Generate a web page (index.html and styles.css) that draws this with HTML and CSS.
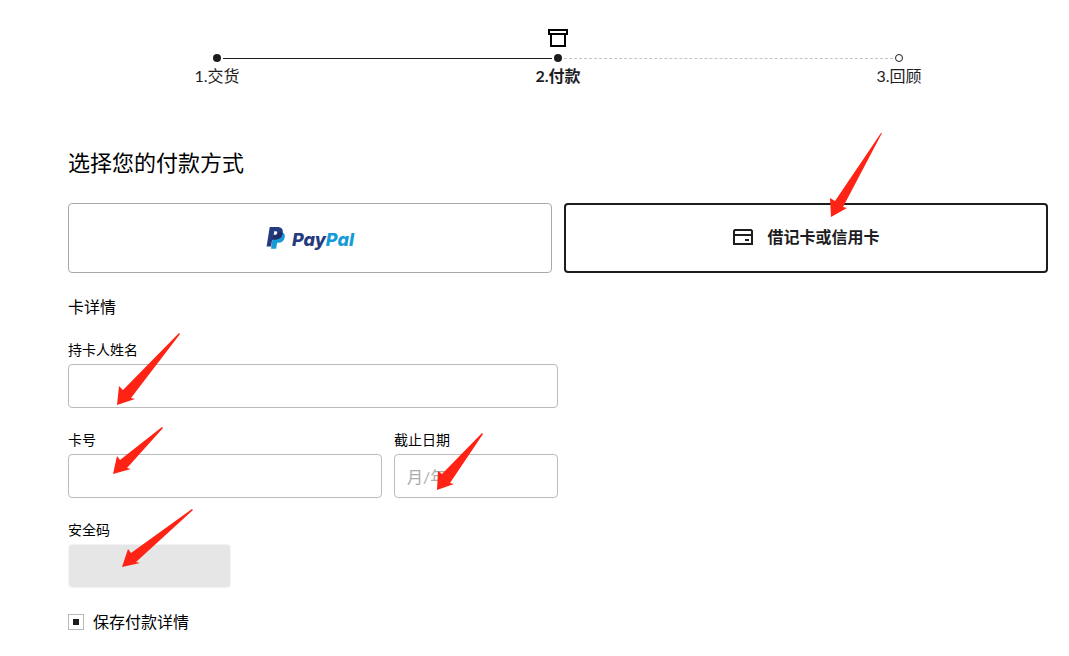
FILE: index.html
```html
<!DOCTYPE html>
<html lang="zh-CN">
<head>
<meta charset="utf-8">
<meta name="viewport" content="width=device-width, initial-scale=1">
<title>付款</title>
<link rel="stylesheet" href="styles.css">
</head>
<body>
<main class="checkout">
  <nav class="stepper">
    <svg class="stepper-icon" width="20" height="20" viewBox="0 0 20 20" fill="none" stroke="#000" stroke-width="2" aria-hidden="true">
      <path d="M1 2H19V6H1ZM3 6V18H17V6"/>
    </svg>
    <div class="rail">
      <span class="dot"></span>
      <span class="line"></span>
      <span class="dot"></span>
      <span class="line line-todo"></span>
      <span class="dot dot-todo"></span>
    </div>
    <ol class="steps">
      <li>1.交货</li>
      <li class="current">2.付款</li>
      <li>3.回顾</li>
    </ol>
  </nav>

  <h1 class="title">选择您的付款方式</h1>
  <div class="methods">
    <button type="button" class="method">
      <svg width="20" height="24" viewBox="0 0 20 24" aria-hidden="true">
        <path fill="#179bd7" d="M16.6 6.2C18.4 7.2 19.2 9 18.7 11.4C18 15 15.700 16.700 12.300 16.700H11.200L10.200 22.700H5L7 9Z"/>
        <path fill="#253b80" d="M3.700 1H11.200C15.200 1 17.400 3 16.700 7C16 11.300 13.300 13.400 9.100 13.400H7.100C6.500 13.400 6.200 13.700 6.100 14.300L5.100 20.500H.6Z"/>
        <path fill="#fff" d="M8.200 5.200H9.500C10.800 5.200 11.400 5.700 11.200 6.900C11 8.200 10.100 8.700 8.700 8.700H7.700Z"/>
        <path fill="#222d65" d="M7.200 9.700L6.100 14.300C6.200 13.700 6.500 13.400 7.100 13.400H9.100C13.300 13.400 16 11.300 16.600 6.900C14.500 5.800 12.600 6.100 11.900 7.100C11.600 8.900 10.400 9.600 8.500 9.600Z"/>
      </svg>
      <span class="brand">Pay<span class="brand-light">Pal</span></span>
    </button>
    <button type="button" class="method selected">
      <svg width="22" height="18" viewBox="0 0 22 18" fill="none" stroke="#1d1d1f" stroke-width="2" aria-hidden="true">
        <path d="M3 2H19L20 3V16H2V3ZM2 7H20M13 12H17"/>
      </svg>
      <span>借记卡或信用卡</span>
      <svg class="arrow arrow-card" width="54" height="86" viewBox="0 0 54 86" aria-hidden="true"><path d="M2 85L1 66L6 69L52 1L53 1L14 75L18 76Z"/></svg>
    </button>
  </div>

  <form class="card-form">
    <h2 class="subtitle">卡详情</h2>
    <div class="field">
      <label for="holder">持卡人姓名</label>
      <input class="box" id="holder" type="text">
      <svg class="arrow arrow-holder" width="66" height="75" viewBox="0 0 66 75" aria-hidden="true"><path d="M1 73L3 54L7 58L63 1L64 2L15 66L19 67Z"/></svg>
    </div>
    <div class="row">
      <div class="field">
        <label for="number">卡号</label>
        <input class="box" id="number" type="text">
        <svg class="arrow arrow-number" width="52" height="50" viewBox="0 0 52 50" aria-hidden="true"><path d="M1 48L5 30L8 34L50 1L51 2L15 42L19 43Z"/></svg>
      </div>
      <div class="field">
        <label for="expiry">截止日期</label>
        <input class="box" id="expiry" type="text" placeholder="月/年">
        <svg class="arrow arrow-expiry" width="48" height="60" viewBox="0 0 48 60" aria-hidden="true"><path d="M1 58L2 39L6 42L46 1L47 2L14 51L18 52Z"/></svg>
      </div>
    </div>
    <div class="field">
      <label for="code">安全码</label>
      <input class="box box-off" id="code" type="text" disabled>
      <svg class="arrow arrow-code" width="74" height="61" viewBox="0 0 74 61" aria-hidden="true"><path d="M1 59L7 41L10 45L71 1L72 2L15 54L19 55Z"/></svg>
    </div>
    <label class="save"><input class="check" type="checkbox" checked>保存付款详情</label>
  </form>
</main>
</body>
</html>
```
FILE: styles.css
```css
* { box-sizing: border-box; }

body {
  margin: 0;
  background: #fff;
  color: #1d1d1f;
  font: 16px/24px Lato, "Noto Sans CJK SC", sans-serif;
}

.checkout { padding: 28px 21px 22px 68px; }

.stepper {
  display: flex;
  flex-direction: column;
  margin: 0 126px;
}
.stepper-icon { align-self: center; }
.rail {
  display: flex;
  align-items: center;
  gap: 2px;
  margin-top: 6px;
  padding: 0 19px;
}
.dot {
  width: 8px;
  height: 8px;
  border-radius: 50%;
  background: #1d1d1f;
}
.dot-todo {
  border: 1px solid #1d1d1f;
  background: #fff;
}
.line {
  flex: 1;
  border-top: 1px solid #1d1d1f;
}
.line-todo { border-top: 1px dashed #c4c4c4; }
.steps {
  display: flex;
  justify-content: space-between;
  margin: 2px 0 0;
  padding: 0;
  list-style: none;
}
.steps li {
  width: 46px;
  text-align: center;
  white-space: nowrap;
}
.steps .current { font-weight: 700; }

.title {
  margin: 60px 0 0;
  color: #000;
  font-size: 22px;
  font-weight: 400;
  line-height: 30px;
}
.methods {
  display: grid;
  grid-template-columns: 1fr 1fr;
  gap: 12px;
  margin-top: 25px;
}
.method {
  position: relative;
  display: flex;
  align-items: center;
  justify-content: center;
  gap: 6px;
  height: 70px;
  padding: 0;
  border: 1px solid #aaa;
  border-radius: 4px;
  background: #fff;
  color: #1d1d1f;
  font: inherit;
}
.selected {
  gap: 13px;
  padding-bottom: 2px;
  border: 2px solid #1d1d1f;
  font-weight: 700;
}
.brand {
  padding-top: 4px;
  color: #253b80;
  font-family: Inter, sans-serif;
  font-size: 18px;
  font-style: italic;
  font-weight: 800;
}
.brand-light { color: #179bd7; }

.card-form {
  max-width: 490px;
  margin-top: 22px;
  color: #000;
}
.subtitle {
  margin: 0 0 21px;
  font-size: 16px;
  font-weight: 400;
  line-height: 24px;
}
.field {
  position: relative;
  display: flex;
  flex-direction: column;
  gap: 4px;
  margin-bottom: 22px;
  font-size: 14px;
  line-height: 20px;
}
.row {
  display: grid;
  grid-template-columns: 1fr 164px;
  gap: 12px;
}
.box {
  width: 100%;
  height: 44px;
  padding: 0 12px;
  border: 1px solid #bbb;
  border-radius: 4px;
  background: #fff;
  font: inherit;
  font-size: 16px;
}
.box::placeholder { color: #aaa; }
.box-off {
  width: 163px;
  border-color: #f4f4f4;
  background: #e6e6e6;
}
.save {
  display: flex;
  align-items: center;
  gap: 9px;
  line-height: 24px;
}
.check {
  appearance: none;
  display: grid;
  place-items: center;
  width: 16px;
  height: 16px;
  margin: 0;
  border: 1px solid #bbb;
}
.check:checked::before {
  width: 6px;
  height: 6px;
  background: #1d1d1f;
  content: "";
}

.arrow {
  position: absolute;
  z-index: 1;
  fill: #fe2314;
  pointer-events: none;
}
.arrow-card { top: -73px; left: 263px; }
.arrow-holder { top: -8px; left: 48px; }
.arrow-number { top: -4px; left: 44px; }
.arrow-expiry { top: 2px; left: 42px; }
.arrow-code { top: -12px; left: 53px; }
```
